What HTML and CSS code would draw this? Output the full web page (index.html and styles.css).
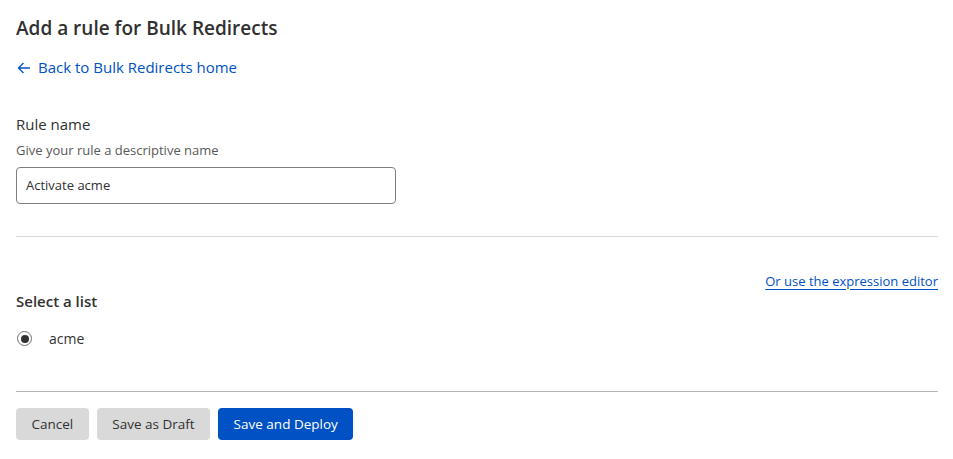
FILE: index.html
```html
<!DOCTYPE html>
<html>
<head>
<meta charset="utf-8">
<link rel="stylesheet" href="styles.css">
</head>
<body>
<div class="page">
  <h1 class="title">Add a rule for Bulk Redirects</h1>
  <a class="back" href="#"><svg class="arrow" width="14" height="12" viewBox="0 0 14 12" fill="none" stroke="#0051c3" stroke-width="1.3"><path d="M13 6H1.5M6.5 1L1.5 6l5 5"/></svg>Back to Bulk Redirects home</a>

  <div class="field">
    <div class="label">Rule name</div>
    <div class="hint">Give your rule a descriptive name</div>
    <div class="input">Activate acme</div>
  </div>

  <hr class="sep">

  <div class="list-head">
    <div class="list-title">Select a list</div>
    <a class="expr" href="#">Or use the expression editor</a>
  </div>

  <label class="radio-row">
    <span class="radio"><span class="dot"></span></span>
    <span class="radio-label">acme</span>
  </label>

  <hr class="sep2">

  <div class="actions">
    <button class="btn grey">Cancel</button>
    <button class="btn grey">Save as Draft</button>
    <button class="btn blue">Save and Deploy</button>
  </div>
</div>
</body>
</html>
```

FILE: styles.css
```css
* { box-sizing: border-box; }
html, body { margin: 0; padding: 0; background: #fff; }
body {
  font-family: "Segoe UI", "Open Sans", "Noto Sans", sans-serif;
  color: #313131;
}
.page {
  width: 922px;
  margin-left: 16px;
  padding-top: 14px;
}
.title {
  margin: 0;
  font-size: 19px;
  font-weight: 600;
  line-height: 28px;
  color: #313131;
}
.back {
  display: inline-flex;
  align-items: center;
  margin-top: 15px;
  font-size: 15px;
  line-height: 20px;
  color: #0051c3;
  text-decoration: none;
}
.arrow { margin: 1px 7px 0 1px; }
.field { margin-top: 35px; }
.label { font-size: 15px; line-height: 20px; }
.hint { margin-top: 7px; font-size: 13px; line-height: 18px; color: #595959; }
.input {
  margin-top: 8px;
  width: 380px;
  height: 37px;
  border: 1px solid #7f7f7f;
  border-radius: 4px;
  padding: 0 9px;
  display: flex;
  align-items: center;
  font-size: 13px;
  color: #313131;
}
.sep {
  margin: 32px 0 0 0;
  border: 0;
  border-top: 1px solid #d9d9d9;
}
.list-head {
  margin-top: 35px;
  display: flex;
  justify-content: space-between;
  align-items: flex-start;
}
.list-title {
  margin-top: 19px;
  font-size: 15px;
  font-weight: 600;
  line-height: 20px;
}
.expr {
  font-size: 13px;
  line-height: 18px;
  color: #0051c3;
  text-decoration: underline;
  text-underline-offset: 3px;
}
.radio-row {
  margin-top: 19px;
  display: flex;
  align-items: center;
  height: 18px;
}
.radio {
  width: 15px;
  height: 15px;
  border: 1px solid #6f6f6f;
  border-radius: 50%;
  display: flex;
  align-items: center;
  justify-content: center;
  margin-left: 1px;
}
.dot { width: 8px; height: 8px; border-radius: 50%; background: #313131; }
.radio-label { margin-left: 17px; font-size: 14px; color: #313131; }
.sep2 {
  margin: 43px 0 0 0;
  border: 0;
  border-top: 1px solid #b5b5b5;
}
.actions {
  margin-top: 16px;
  display: flex;
  gap: 8px;
}
.btn {
  height: 32px;
  border: 0;
  border-radius: 4px;
  padding: 0 15.5px;
  font-family: inherit;
  font-size: 13.5px;
}
.grey { background: #d9d9d9; color: #313131; }
.blue { background: #0051c3; color: #fff; }
```
